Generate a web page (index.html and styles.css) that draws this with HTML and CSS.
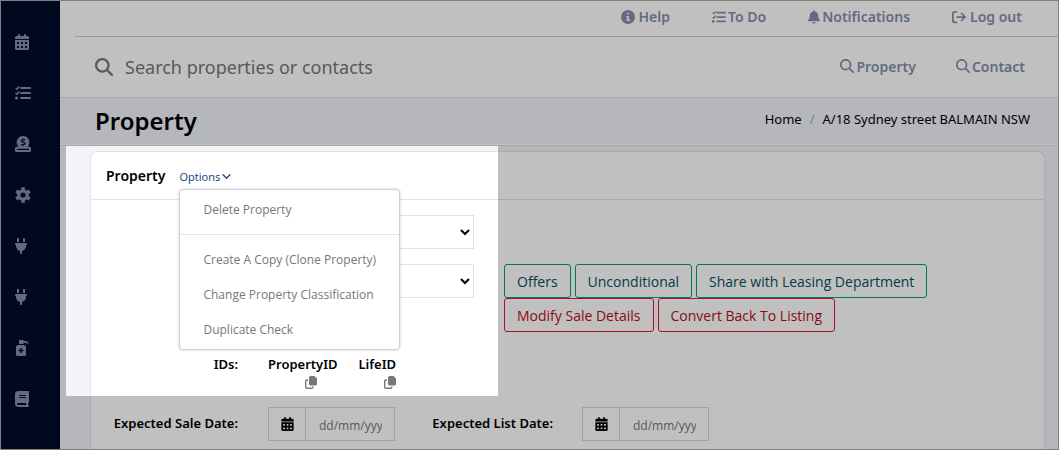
FILE: index.html
```html
<!DOCTYPE html>
<html lang="en">
<head>
    <meta charset="utf-8">
    <title>Property</title>
    <link rel="stylesheet" href="styles.css">
</head>
<body>
    <svg class="sprite" aria-hidden="true">
        <symbol id="search" viewBox="0 0 512 512">
            <path d="M416 208c0 45.9-14.9 88.3-40 122.7L502.6 457.4c12.5 12.5 12.5 32.8 0 45.3s-32.8 12.5-45.3 0L330.7 376c-34.4 25.2-76.8 40-122.7 40C93.1 416 0 322.9 0 208S93.1 0 208 0S416 93.1 416 208zM208 352a144 144 0 1 0 0-288 144 144 0 1 0 0 288z"/>
        </symbol>
        <symbol id="calendar" viewBox="0 0 14 16">
            <path fill-rule="evenodd" d="M3 1a1 1 0 0 1 2 0v1h4V1a1 1 0 0 1 2 0v1h1.500A1.500 1.500 0 0 1 14 3.500V5H0V3.500A1.500 1.500 0 0 1 1.500 2H3zM0 6h14v8.500a1.500 1.500 0 0 1-1.500 1.500h-11A1.500 1.500 0 0 1 0 14.500zM2 8v2h2V8zM6 8v2h2V8zM10 8v2h2V8zM2 12v2h2v-2zM6 12v2h2v-2zM10 12v2h2v-2z"/>
        </symbol>
        <symbol id="tasks" viewBox="0 0 16 16">
            <path d="M6 2h9a1 1 0 0 1 0 2H6a1 1 0 0 1 0-2zM6 7h9a1 1 0 0 1 0 2H6a1 1 0 0 1 0-2zM6 12h9a1 1 0 0 1 0 2H6a1 1 0 0 1 0-2z"/>
            <circle cx="1.500" cy="13" r="1.500"/>
            <path class="line" stroke-width="1.500" d="M.7 3l1.300 1.200L4.300 1.600M.7 8l1.300 1.200L4.300 6.600"/>
        </symbol>
        <symbol id="donate" viewBox="0 0 16 16">
            <path fill-rule="evenodd" d="M8 0a6.300 6.300 0 0 1 4.500 10.700H14.500A1.500 1.500 0 0 1 16 12.200v2.300a1.500 1.500 0 0 1-1.500 1.500h-13A1.500 1.500 0 0 1 0 14.500v-2.300a1.500 1.500 0 0 1 1.500-1.500H3.500A6.300 6.300 0 0 1 8 0zM2 12.800v1.200h12v-1.200z"/>
            <path class="cut" d="M10 4.300C9 3.600 6.300 3.400 6.300 4.900c0 1.600 3.600 1 3.600 2.700 0 1.500-2.500 1.500-3.800.7M8 2.500v1.200M8 8.800V10"/>
        </symbol>
        <symbol id="gear" viewBox="0 0 16 16">
            <circle class="line" cx="8" cy="8" r="4.200" stroke-width="3.200"/>
            <path class="line" stroke-width="3.600" d="M8 .2v3M8 12.800v3M1.250 4.100l2.600 1.500M12.150 10.400l2.600 1.500M1.250 11.900l2.600-1.500M12.150 5.600l2.600-1.500"/>
        </symbol>
        <symbol id="plug" viewBox="0 0 384 512">
            <path d="M96 0C78.300 0 64 14.300 64 32v96h64V32c0-17.700-14.300-32-32-32zM288 0c-17.700 0-32 14.300-32 32v96h64V32c0-17.700-14.300-32-32-32zM32 160c-17.700 0-32 14.300-32 32s14.300 32 32 32v32c0 77.400 55 142 128 156.800V480c0 17.700 14.300 32 32 32s32-14.300 32-32V412.800C297 398 352 333.400 352 256V224c17.700 0 32-14.300 32-32s-14.300-32-32-32H32z"/>
        </symbol>
        <symbol id="pump" viewBox="0 0 14 16">
            <path fill-rule="evenodd" d="M4 0h4.500v1H11a3 3 0 0 1 2.500 2.500l-1.200.5C12 3.200 11.500 2.800 11 2.800H8.500V4H4zM3.500 5h5A2.500 2.500 0 0 1 11 7.500v7A1.500 1.500 0 0 1 9.500 16h-7A1.500 1.500 0 0 1 1 14.500v-7A2.500 2.500 0 0 1 3.500 5zM5.300 8v1.800H3.500v1.500h1.800V13h1.500v-1.700h1.800V9.800H6.800V8z"/>
        </symbol>
        <symbol id="book" viewBox="0 0 448 512">
            <path d="M96 0C43 0 0 43 0 96V416c0 53 43 96 96 96H384h32c17.700 0 32-14.300 32-32s-14.300-32-32-32V384c17.700 0 32-14.300 32-32V32c0-17.700-14.300-32-32-32H384 96zm0 384H352v64H96c-17.700 0-32-14.300-32-32s14.300-32 32-32zm32-240c0-8.800 7.200-16 16-16H336c8.800 0 16 7.200 16 16s-7.200 16-16 16H144c-8.800 0-16-7.200-16-16zm16 48H336c8.800 0 16 7.200 16 16s-7.200 16-16 16H144c-8.800 0-16-7.200-16-16s7.200-16 16-16z"/>
        </symbol>
        <symbol id="info" viewBox="0 0 16 16">
            <path fill-rule="evenodd" d="M8 0a8 8 0 1 1 0 16A8 8 0 0 1 8 0zM8 3a1.100 1.100 0 1 0 0 2.200A1.100 1.100 0 0 0 8 3zM6 6.800v1.500h1.200v2.400H6v1.500h4.200v-1.500H9V6.800z"/>
        </symbol>
        <symbol id="bell" viewBox="0 0 448 512">
            <path d="M224 0c-17.700 0-32 14.300-32 32V51.200C119 66 64 130.600 64 208v18.800c0 47-17.300 92.400-48.500 127.600l-7.400 8.300c-8.400 9.400-10.400 22.900-5.300 34.400S19.400 416 32 416H416c12.600 0 24-7.400 29.200-18.900s3.100-25-5.300-34.400l-7.400-8.300C401.300 319.200 384 273.900 384 226.800V208c0-77.400-55-142-128-156.800V32c0-17.700-14.300-32-32-32zm45.300 493.300c12-12 18.700-28.300 18.700-45.300H160c0 17 6.700 33.300 18.700 45.300s28.300 18.700 45.300 18.700s33.300-6.700 45.300-18.700z"/>
        </symbol>
        <symbol id="logout" viewBox="0 0 16 16">
            <path class="line round" stroke-width="2" d="M5 2H3a2 2 0 0 0-2 2v8a2 2 0 0 0 2 2h2M6 8h9M11 4l4 4-4 4"/>
        </symbol>
        <symbol id="chevron" viewBox="0 0 8 8">
            <path class="line round" stroke-width="1.200" d="M1 2.500l3 3 3-3"/>
        </symbol>
        <symbol id="copy" viewBox="0 0 12 13">
            <path d="M5.500 0H9.500L12 2.500V8a1.500 1.500 0 0 1-1.500 1.500h-5A1.500 1.500 0 0 1 4 8V1.500A1.500 1.500 0 0 1 5.500 0z"/>
            <path class="line" stroke-width="1.400" d="M3 4H1.700a1 1 0 0 0-1 1v6.300a1 1 0 0 0 1 1h5.100a1 1 0 0 0 1-1v-.8"/>
        </symbol>
    </svg>

    <div class="layout">
        <nav class="sidebar">
            <a href="#" aria-label="Calendar"><svg class="w14"><use href="#calendar"/></svg></a>
            <a href="#" aria-label="Tasks"><svg class="w16"><use href="#tasks"/></svg></a>
            <a href="#" aria-label="Accounts"><svg class="w16"><use href="#donate"/></svg></a>
            <a href="#" aria-label="Settings"><svg class="w16"><use href="#gear"/></svg></a>
            <a href="#" aria-label="Integrations"><svg class="w12"><use href="#plug"/></svg></a>
            <a href="#" aria-label="Plugins"><svg class="w12"><use href="#plug"/></svg></a>
            <a href="#" aria-label="Maintenance"><svg class="w14"><use href="#pump"/></svg></a>
            <a href="#" aria-label="Library"><svg class="w14"><use href="#book"/></svg></a>
        </nav>

        <div class="main">
            <header>
                <nav class="topnav">
                    <a href="#"><svg><use href="#info"/></svg>Help</a>
                    <a href="#" class="tight"><svg><use href="#tasks"/></svg>To Do</a>
                    <a href="#" class="tight"><svg class="bell"><use href="#bell"/></svg>Notifications</a>
                    <a href="#"><svg><use href="#logout"/></svg>Log out</a>
                </nav>
                <div class="searchbar">
                    <svg><use href="#search"/></svg>
                    <input type="text" placeholder="Search properties or contacts" aria-label="Search properties or contacts">
                    <nav class="searchnav">
                        <a href="#" class="tight"><svg><use href="#search"/></svg>Property</a>
                        <a href="#" class="tight"><svg><use href="#search"/></svg>Contact</a>
                    </nav>
                </div>
            </header>

            <div class="titlebar">
                <h1>Property</h1>
                <div class="breadcrumb">
                    <a href="#">Home</a>
                    <span>/</span>
                    <a href="#">A/18 Sydney street BALMAIN NSW</a>
                </div>
            </div>

            <section class="card">
                <div class="card-header">
                    <h2>Property</h2>
                    <div class="dropdown">
                        <button type="button" class="options">Options<svg><use href="#chevron"/></svg></button>
                        <div class="menu">
                            <a href="#">Delete Property</a>
                            <hr>
                            <a href="#">Create A Copy (Clone Property)</a>
                            <a href="#">Change Property Classification</a>
                            <a href="#">Duplicate Check</a>
                        </div>
                    </div>
                </div>

                <div class="card-body">
                    <div class="details">
                        <select aria-label="Category"><option></option></select>
                        <select aria-label="Status"><option></option></select>
                        <div class="ids">
                            <span class="label">IDs:</span>
                            <div class="id">PropertyID<button type="button" aria-label="Copy PropertyID"><svg><use href="#copy"/></svg></button></div>
                            <div class="id">LifeID<button type="button" aria-label="Copy LifeID"><svg><use href="#copy"/></svg></button></div>
                        </div>
                    </div>
                    <div class="actions">
                        <button type="button" class="btn green">Offers</button>
                        <button type="button" class="btn green">Unconditional</button>
                        <button type="button" class="btn green">Share with Leasing Department</button>
                        <div class="break"></div>
                        <button type="button" class="btn red">Modify Sale Details</button>
                        <button type="button" class="btn red">Convert Back To Listing</button>
                    </div>
                </div>

                <div class="dates">
                    <label class="label" for="sale_date">Expected Sale Date:</label>
                    <div class="date">
                        <span><svg><use href="#calendar"/></svg></span>
                        <input type="text" id="sale_date" placeholder="dd/mm/yyyy">
                    </div>
                    <label class="label" for="list_date">Expected List Date:</label>
                    <div class="date">
                        <span><svg><use href="#calendar"/></svg></span>
                        <input type="text" id="list_date" placeholder="dd/mm/yyyy">
                    </div>
                </div>
            </section>
        </div>
    </div>
    <div class="spotlight"></div>
</body>
</html>
```

FILE: styles.css
```css
* {
    box-sizing: border-box;
}
body {
    margin: 0;
    overflow: hidden;
    font-family: "Noto Sans", sans-serif;
    font-size: 13px;
    color: #000;
    background-color: #f2f4fa;
}
/* frame round the window */
body::after {
    content: "";
    position: fixed;
    inset: 0;
    border: 1px solid #7f7f7f;
    z-index: 20;
    pointer-events: none;
}
a {
    color: inherit;
    text-decoration: none;
}
button {
    font-family: inherit;
    cursor: pointer;
}
svg {
    fill: currentColor;
    flex-shrink: 0;
}
.sprite {
    display: none;
}
.line {
    fill: none;
    stroke: currentColor;
}
.round {
    stroke-linecap: round;
    stroke-linejoin: round;
}
.cut {
    fill: none;
    stroke: #000d2b;
    stroke-width: 1.3;
}
.layout {
    display: flex;
    min-height: 100vh;
}

/* sidebar */
.sidebar {
    width: 60px;
    padding: 16px 0 0 15px;
    background-color: #000d2b;
    color: #8490a8;
}
.sidebar a {
    display: flex;
    align-items: center;
    height: 51px;
}
.sidebar svg {
    height: 16px;
}
.w12 {
    width: 12px;
}
.w14 {
    width: 14px;
}
.w16 {
    width: 16px;
}

/* header */
.main {
    flex: 1;
    min-width: 0;
    display: flex;
    flex-direction: column;
}
header {
    background-color: #fff;
    border-bottom: 1px solid #dddee1;
}
.topnav {
    display: flex;
    justify-content: flex-end;
    align-items: center;
    gap: 42px;
    height: 37px;
    margin-left: 15px;
    padding: 0 37px 3px 0;
    border-bottom: 1px solid #cccccc;
}
.topnav a, .searchnav a {
    display: flex;
    align-items: center;
    gap: 4px;
    font-size: 14px;
    font-weight: 600;
    color: #848eac;
}
.topnav a.tight, .searchnav a.tight {
    gap: 2px;
}
.topnav svg, .searchnav svg {
    width: 14px;
    height: 14px;
}
.topnav .bell {
    width: 12px;
}
.searchbar {
    display: flex;
    align-items: center;
    height: 60px;
    padding: 0 34px 0 35px;
    color: #777;
}
.searchbar > svg {
    width: 18px;
    height: 18px;
}
.searchbar input {
    flex: 1;
    min-width: 0;
    padding: 0 12px;
    border: none;
    outline: none;
    background: none;
    font-family: inherit;
    font-size: 18px;
}
input::placeholder {
    color: #777;
}
.searchnav {
    display: flex;
    gap: 40px;
    padding-bottom: 2px;
}

/* title */
.titlebar {
    display: flex;
    justify-content: space-between;
    align-items: center;
    height: 47px;
    padding: 0 29px 2px 35px;
    border-bottom: 1px solid #fff;
    box-shadow: 0 1px 0 #dddee1;
}
h1 {
    margin: 0;
    font-size: 24px;
    font-weight: 600;
}
.breadcrumb {
    display: flex;
    gap: 8px;
    padding-bottom: 2px;
}
.breadcrumb span {
    color: #aaa;
}

/* card */
.card {
    flex: 1;
    margin: 6px 14px 0 30px;
    border: 1px solid #e2e4e8;
    border-bottom: none;
    border-radius: 8px 8px 0 0;
    background-color: #fff;
}
.card-header {
    display: flex;
    align-items: center;
    gap: 14px;
    height: 48px;
    padding-left: 15px;
    border-bottom: 1px solid #e2e4e8;
}
h2 {
    margin: 0;
    font-size: 14px;
    font-weight: 600;
}
.dropdown {
    position: relative;
}
.options {
    display: flex;
    align-items: center;
    gap: 2px;
    padding: 2px 0 0;
    border: none;
    background: none;
    font-size: 11px;
    color: #1b4b7f;
}
.options svg {
    width: 9px;
    height: 9px;
}
.menu {
    position: absolute;
    top: 100%;
    left: 0;
    width: 221px;
    margin-top: 5px;
    padding: 2px 0;
    border: 1px solid #cdd1dc;
    border-radius: 4px;
    background-color: #fff;
    box-shadow: 0 0 3px rgba(0, 0, 40, 0.2);
    font-family: "Open Sans", sans-serif;
    font-size: 12px;
    color: #777;
    z-index: 5;
}
.menu a {
    display: block;
    padding: 0 23px;
    line-height: 35px;
}
.menu hr {
    margin: 7px 0;
    border: none;
    border-top: 1px solid #e2e4e8;
}
.card-body {
    display: flex;
    padding-top: 15px;
}
.details {
    width: 383px;
    margin-right: 30px;
    padding-left: 177px;
}
.details select {
    display: block;
    width: 100%;
    height: 34px;
    margin-bottom: 15px;
    border: 1px solid #e2e2e2;
    background-color: #fff;
}
.label {
    font-weight: 600;
    text-align: right;
}
.ids {
    display: flex;
    margin: 57px 0 0 -177px;
    font-weight: 600;
    line-height: 18px;
}
.ids .label {
    width: 147px;
    margin-right: 30px;
}
.id {
    display: flex;
    flex-direction: column;
    margin-right: 21px;
}
.id button {
    align-self: flex-end;
    height: 18px;
    padding: 0;
    border: none;
    background: none;
    color: #777;
}
.id:first-of-type button {
    margin-right: 21px;
}
.id svg {
    display: block;
    width: 12px;
    height: 13px;
}
.actions {
    flex: 1;
    display: flex;
    flex-wrap: wrap;
    align-content: flex-start;
    column-gap: 4px;
    padding-top: 49px;
}
.break {
    width: 100%;
}
.btn {
    height: 34px;
    padding: 0 12px;
    border: 1px solid;
    border-radius: 3px;
    background: none;
    font-family: "Open Sans", sans-serif;
    font-size: 14px;
}
.green {
    border-color: #00a272;
    color: #00535a;
}
.red {
    border-color: #e8172f;
    color: #ba0d1b;
}
.dates {
    display: flex;
    align-items: center;
    margin-top: 16px;
}
.dates .label {
    width: 147px;
    margin-right: 30px;
    padding-bottom: 2px;
}
.date + .label {
    width: 158px;
    margin-right: 29px;
}
.date {
    display: flex;
    width: 127px;
    height: 34px;
    border: 1px solid #d8d8d8;
}
.date span {
    display: flex;
    align-items: center;
    justify-content: center;
    width: 37px;
    border-right: 1px solid #d8d8d8;
}
.date svg {
    width: 13px;
    height: 14px;
}
.date input {
    flex: 1;
    min-width: 0;
    padding: 2px 12px 0 13px;
    border: none;
    background: none;
    font-family: "Open Sans", sans-serif;
    font-size: 12px;
}

/* tour highlight, everything outside it is dimmed */
.spotlight {
    position: absolute;
    top: 146px;
    left: 66px;
    width: 432px;
    height: 250px;
    box-shadow: 0 0 2px 2000px rgba(0, 0, 0, 0.247);
    z-index: 10;
    pointer-events: none;
}
```
